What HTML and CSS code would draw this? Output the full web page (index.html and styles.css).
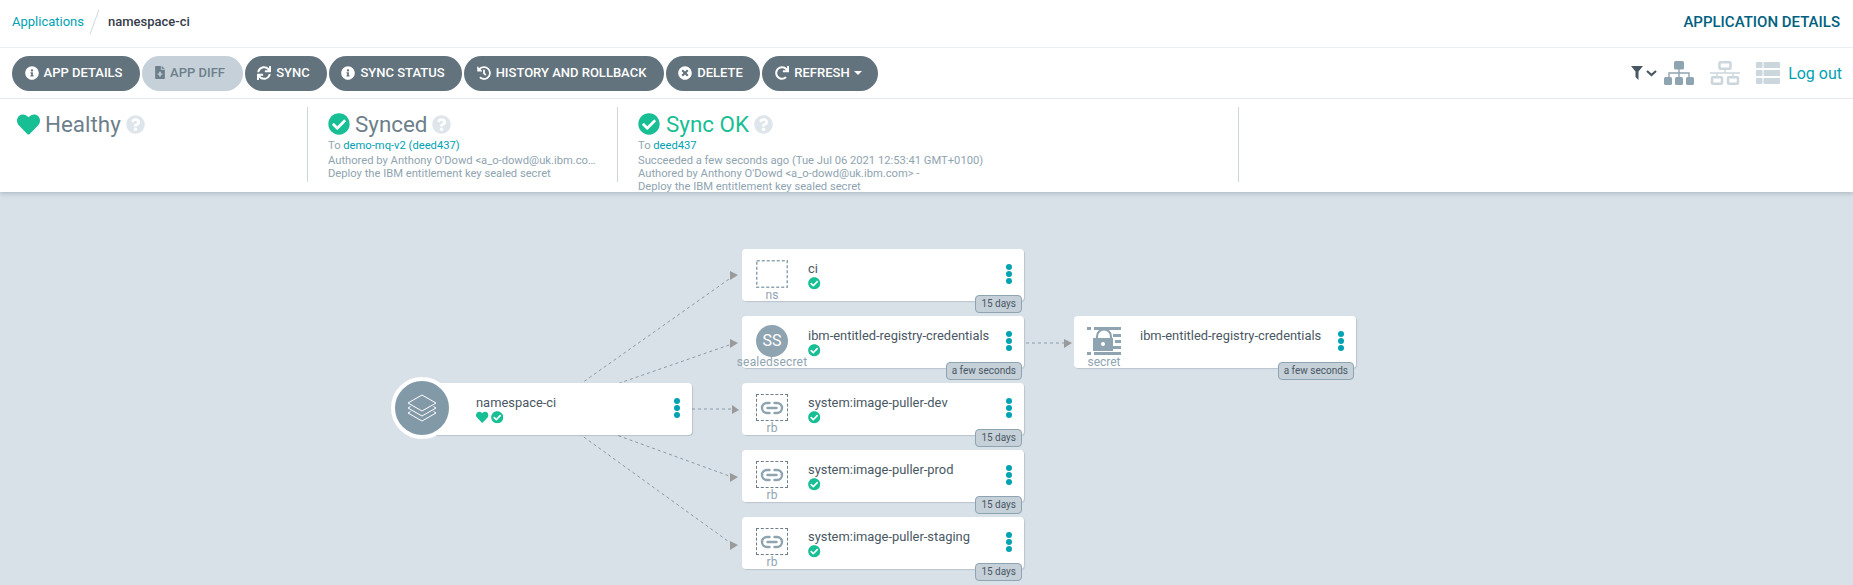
FILE: index.html
```html
<!DOCTYPE html>
<html lang="en">
<head>
  <meta charset="UTF-8" />
  <title>namespace-ci - Argo CD</title>
  <link rel="stylesheet" href="styles.css">
</head>
<body>
  <svg class="sprites" xmlns="http://www.w3.org/2000/svg">
    <symbol id="i-check" viewBox="0 0 512 512"><path d="M504 256c0 136.967-111.033 248-248 248S8 392.967 8 256 119.033 8 256 8s248 111.033 248 248zM227.314 387.314l184-184c6.248-6.248 6.248-16.379 0-22.627l-22.627-22.627c-6.248-6.249-16.379-6.249-22.628 0L216 308.118l-70.059-70.059c-6.248-6.248-16.379-6.248-22.628 0l-22.627 22.627c-6.248 6.248-6.248 16.379 0 22.627l104 104c6.249 6.249 16.379 6.249 22.628.001z"/></symbol>
    <symbol id="i-heart" viewBox="0 0 512 512"><path d="M462.3 62.6C407.5 15.9 326 24.3 275.7 76.2L256 96.5l-19.7-20.3C186.1 24.3 104.5 15.9 49.7 62.6c-62.8 53.6-66.1 149.8-9.9 207.9l193.5 199.8c12.5 12.9 32.8 12.9 45.3 0l193.5-199.8c56.3-58.1 53-154.3-9.8-207.9z"/></symbol>
    <symbol id="i-question" viewBox="0 0 512 512"><path d="M504 256c0 136.997-111.043 248-248 248S8 392.997 8 256C8 119.083 119.043 8 256 8s248 111.083 248 248zM262.655 90c-54.497 0-89.255 22.957-116.549 63.758-3.536 5.286-2.353 12.415 2.715 16.258l34.699 26.31c5.205 3.947 12.621 3.008 16.665-2.122 17.864-22.658 30.113-35.797 57.303-35.797 20.429 0 45.698 13.148 45.698 32.958 0 14.976-12.363 22.667-32.534 33.976C247.128 238.528 216 254.941 216 296v4c0 6.627 5.373 12 12 12h56c6.627 0 12-5.373 12-12v-1.333c0-28.462 83.186-29.647 83.186-106.667 0-58.002-60.165-102-116.531-102zM256 338c-25.365 0-46 20.635-46 46 0 25.364 20.635 46 46 46s46-20.636 46-46c0-25.365-20.635-46-46-46z"/></symbol>
    <symbol id="i-info" viewBox="0 0 512 512"><path d="M256 8C119.043 8 8 119.083 8 256c0 136.997 111.043 248 248 248s248-111.003 248-248C504 119.083 392.957 8 256 8zm0 110c23.196 0 42 18.804 42 42s-18.804 42-42 42-42-18.804-42-42 18.804-42 42-42zm56 254c0 6.627-5.373 12-12 12h-88c-6.627 0-12-5.373-12-12v-24c0-6.627 5.373-12 12-12h12v-64h-12c-6.627 0-12-5.373-12-12v-24c0-6.627 5.373-12 12-12h64c6.627 0 12 5.373 12 12v100h12c6.627 0 12 5.373 12 12v24z"/></symbol>
    <symbol id="i-times" viewBox="0 0 512 512"><path d="M256 8C119 8 8 119 8 256s111 248 248 248 248-111 248-248S393 8 256 8zm121.6 313.1c4.7 4.7 4.7 12.3 0 17L338 377.6c-4.7 4.7-12.3 4.7-17 0L256 312l-65.1 65.6c-4.7 4.7-12.3 4.7-17 0L134.4 338c-4.7-4.7-4.7-12.3 0-17l65.6-65-65.6-65.1c-4.7-4.7-4.7-12.3 0-17l39.6-39.6c4.7-4.7 12.3-4.7 17 0l65 65.7 65.1-65.6c4.7-4.7 12.3-4.7 17 0l39.6 39.6c4.7 4.7 4.7 12.3 0 17L312 256l65.6 65.1z"/></symbol>
    <symbol id="i-sync" viewBox="0 0 512 512"><path d="M440.65 12.57l4 82.77A247.16 247.16 0 0 0 255.83 8C134.73 8 33.91 94.92 12.29 209.82A12 12 0 0 0 24.09 224h49.05a12 12 0 0 0 11.67-9.26 175.91 175.91 0 0 1 317-56.94l-101.46-4.86a12 12 0 0 0-12.57 12v47.41a12 12 0 0 0 12 12H500a12 12 0 0 0 12-12V12a12 12 0 0 0-12-12h-47.37a12 12 0 0 0-11.98 12.57zM255.83 432a175.61 175.61 0 0 1-146-77.8l101.8 4.87a12 12 0 0 0 12.57-12v-47.4a12 12 0 0 0-12-12H12a12 12 0 0 0-12 12V500a12 12 0 0 0 12 12h47.35a12 12 0 0 0 12-12.6l-4.15-82.57A247.17 247.17 0 0 0 255.83 504c121.11 0 221.93-86.92 243.55-201.82a12 12 0 0 0-11.8-14.18h-49.05a12 12 0 0 0-11.67 9.26A175.86 175.86 0 0 1 255.83 432z"/></symbol>
    <symbol id="i-history" viewBox="0 0 512 512"><path d="M504 255.531c.253 136.64-111.18 248.372-247.82 248.468-59.015.042-113.223-20.53-155.822-54.911-11.077-8.94-11.905-25.541-1.839-35.607l11.267-11.267c8.609-8.609 22.353-9.551 31.891-1.984C173.062 425.135 212.781 440 256 440c101.705 0 184-82.311 184-184 0-101.705-82.311-184-184-184-48.814 0-93.149 18.969-126.068 49.932l50.754 50.754c10.08 10.08 2.941 27.314-11.313 27.314H24c-8.837 0-16-7.163-16-16V38.627c0-14.254 17.234-21.393 27.314-11.314l49.372 49.372C129.209 34.136 189.552 8 256 8c136.81 0 247.747 110.78 248 247.531zm-180.912 78.784l9.823-12.63c8.138-10.463 6.253-25.542-4.21-33.679L288 256.349V152c0-13.255-10.745-24-24-24h-16c-13.255 0-24 10.745-24 24v135.651l65.409 50.874c10.463 8.137 25.541 6.253 33.679-4.21z"/></symbol>
    <symbol id="i-redo" viewBox="0 0 512 512"><path d="M500.33 0h-47.41a12 12 0 0 0-12 12.57l4 82.76A247.42 247.42 0 0 0 256 8C119.34 8 7.9 119.53 8 256.19 8.1 393.07 119.1 504 256 504a247.1 247.1 0 0 0 166.18-63.91 12 12 0 0 0 .48-17.43l-34-34a12 12 0 0 0-16.38-.55A176 176 0 1 1 402.1 157.8l-101.53-4.87a12 12 0 0 0-12.57 12v47.41a12 12 0 0 0 12 12h200.33a12 12 0 0 0 12-12V12a12 12 0 0 0-12-12z"/></symbol>
    <symbol id="i-file" viewBox="0 0 12 16"><path fill-rule="evenodd" d="M1 0h6v4.500h5V15a1 1 0 0 1-1 1H1a1 1 0 0 1-1-1V1a1 1 0 0 1 1-1zM8 0l4 3.500H8zM5 7v2.200H3v1.600h2V13h2v-2.200h2V9.200H7V7z"/></symbol>
    <symbol id="i-link" viewBox="0 0 24 14"><path d="M9.500 2H7a5 5 0 0 0 0 10h2.500M14.500 2H17a5 5 0 0 1 0 10h-2.500M7.500 7h9" fill="none" stroke="currentColor" stroke-width="2.400" stroke-linecap="round"/></symbol>
  </svg>

  <div class="topbar">
    <div class="crumbs">
      <a class="link">Applications</a>
      <span class="crumb-sep"></span>
      <span class="crumb-current">namespace-ci</span>
    </div>
    <div class="page-title">APPLICATION DETAILS</div>
  </div>

  <div class="toolbar">
    <div class="actions">
      <button class="btn btn-details"><svg><use href="#i-info"/></svg>APP DETAILS</button>
      <button class="btn btn-diff"><svg class="ic-file"><use href="#i-file"/></svg>APP DIFF</button>
      <button class="btn btn-sync"><svg><use href="#i-sync"/></svg>SYNC</button>
      <button class="btn btn-status"><svg><use href="#i-info"/></svg>SYNC STATUS</button>
      <button class="btn btn-history"><svg><use href="#i-history"/></svg>HISTORY AND ROLLBACK</button>
      <button class="btn btn-delete"><svg><use href="#i-times"/></svg>DELETE</button>
      <button class="btn btn-refresh"><svg><use href="#i-redo"/></svg>REFRESH<span class="caret"></span></button>
    </div>
    <div class="view-tools">
      <svg class="ic-filter" viewBox="0 0 12 14"><path d="M0 0h12L7.500 5.500V14L4.500 11V5.500z"/></svg>
      <svg class="ic-chevron" viewBox="0 0 11 7"><path d="M1 1l4.500 4L10 1" fill="none" stroke="currentColor" stroke-width="2.200"/></svg>
      <svg class="ic-tree" viewBox="0 0 30 24">
        <rect x="10" y="0" width="10" height="8.500" rx="1.500" fill="currentColor"/>
        <path d="M15 8v4M5 16v-4h20v4M15 12v4" fill="none" stroke="currentColor" stroke-width="1.400"/>
        <rect x="0" y="16" width="8" height="8" rx="1.500" fill="currentColor"/>
        <rect x="11" y="16" width="8" height="8" rx="1.500" fill="currentColor"/>
        <rect x="22" y="16" width="8" height="8" rx="1.500" fill="currentColor"/>
      </svg>
      <svg class="ic-network" viewBox="0 0 30 24">
        <rect x="9.500" y="1.250" width="11" height="6.500" rx="1" fill="none" stroke="currentColor" stroke-width="2.500"/>
        <path d="M15 8v4M0 12h30M7 12v5M23 12v5" fill="none" stroke="currentColor" stroke-width="1.400"/>
        <rect x="2" y="16.250" width="10" height="6.500" rx="1" fill="none" stroke="currentColor" stroke-width="2.500"/>
        <rect x="18" y="16.250" width="10" height="6.500" rx="1" fill="none" stroke="currentColor" stroke-width="2.500"/>
      </svg>
      <svg class="ic-list" viewBox="0 0 24 22">
        <rect x="0" y="0" width="6.500" height="6" rx="1" fill="currentColor"/>
        <rect x="7.500" y="0" width="16.500" height="6" rx="1" fill="currentColor"/>
        <rect x="0" y="8" width="6.500" height="6" rx="1" fill="currentColor"/>
        <rect x="7.500" y="8" width="16.500" height="6" rx="1" fill="currentColor"/>
        <rect x="0" y="16" width="6.500" height="6" rx="1" fill="currentColor"/>
        <rect x="7.500" y="16" width="16.500" height="6" rx="1" fill="currentColor"/>
      </svg>
      <a class="link logout">Log out</a>
    </div>
  </div>

  <div class="status-panel">
    <div class="status-item status-health">
      <div class="status-head">
        <svg class="ic-heart"><use href="#i-heart"/></svg>
        <span class="status-value">Healthy</span>
        <svg class="ic-help"><use href="#i-question"/></svg>
      </div>
    </div>
    <div class="status-item status-sync">
      <div class="status-head">
        <svg class="ic-check"><use href="#i-check"/></svg>
        <span class="status-value">Synced</span>
        <svg class="ic-help"><use href="#i-question"/></svg>
      </div>
      <div class="status-line status-to">To <a class="link">demo-mq-v2 (deed437)</a></div>
      <div class="status-line status-cut">Authored by Anthony O'Dowd &lt;a_o-dowd@uk.ibm.com&gt; -</div>
      <div class="status-line">Deploy the IBM entitlement key sealed secret</div>
    </div>
    <div class="status-item status-op">
      <div class="status-head">
        <svg class="ic-check"><use href="#i-check"/></svg>
        <span class="status-value status-ok">Sync OK</span>
        <svg class="ic-help"><use href="#i-question"/></svg>
      </div>
      <div class="status-line status-to">To <a class="link">deed437</a></div>
      <div class="status-line">Succeeded a few seconds ago (Tue Jul 06 2021 12:53:41 GMT+0100)</div>
      <div class="status-line">Authored by Anthony O'Dowd &lt;a_o-dowd@uk.ibm.com&gt; -</div>
      <div class="status-line">Deploy the IBM entitlement key sealed secret</div>
    </div>
  </div>

  <div class="graph">
    <svg class="edges" width="1853" height="393">
      <g class="edge-lines">
        <path d="M545 217L732 85"/>
        <path d="M545 217L732 152"/>
        <path d="M692 217L732 217"/>
        <path d="M545 217L732 285"/>
        <path d="M545 217L732 352"/>
        <path d="M1026 151L1064 151"/>
      </g>
      <g class="edge-arrows">
        <path d="M730 79l8 4-8 5z"/>
        <path d="M730 147l8 4-8 5z"/>
        <path d="M732 213l7 5-7 4z"/>
        <path d="M730 281l8 4-8 5z"/>
        <path d="M730 349l8 4-8 5z"/>
        <path d="M1064 147l8 4-8 5z"/>
      </g>
    </svg>

    <div class="node node-root">
      <div class="root-circle">
        <svg viewBox="0 0 32 32">
          <path d="M16 3L30 11L16 19L2 11Z M4.500 14.500L2 16L16 24L30 16L27.500 14.500 M4.500 19.500L2 21L16 29L30 21L27.500 19.500" fill="none" stroke="#fff" stroke-width="1" stroke-linejoin="round"/>
        </svg>
      </div>
      <div class="node-kind"></div>
      <div class="node-info">
        <div class="node-name">namespace-ci</div>
        <div class="node-status">
          <svg class="ic-status"><use href="#i-heart"/></svg>
          <svg class="ic-status"><use href="#i-check"/></svg>
        </div>
      </div>
      <div class="dots"><span></span><span></span><span></span></div>
    </div>

    <div class="node node-ns">
      <div class="node-kind">
        <svg class="kind-ns" viewBox="0 0 32 28"><rect x="0.750" y="0.750" width="30.500" height="26.500" fill="none" stroke="currentColor" stroke-width="1.500" stroke-dasharray="3 2"/></svg>
        <div class="kind-label">ns</div>
      </div>
      <div class="node-info">
        <div class="node-name">ci</div>
        <div class="node-status"><svg class="ic-status"><use href="#i-check"/></svg></div>
      </div>
      <div class="dots"><span></span><span></span><span></span></div>
      <div class="age">15 days</div>
    </div>

    <div class="node node-sealed">
      <div class="node-kind"><div class="kind-circle">SS</div><div class="kind-label">sealedsecret</div></div>
      <div class="node-info">
        <div class="node-name">ibm-entitled-registry-credentials</div>
        <div class="node-status"><svg class="ic-status"><use href="#i-check"/></svg></div>
      </div>
      <div class="dots"><span></span><span></span><span></span></div>
      <div class="age">a few seconds</div>
    </div>

    <div class="node node-secret">
      <div class="node-kind">
        <svg class="kind-secret" viewBox="0 0 34 28">
          <path d="M0 0h4v3H0zM7 0h27v3H7zM26 7h8v3h-8zM28 13h6v3h-6zM26 19h8v3h-8zM0 25h4v3H0zM7 25h27v3H7z" fill="currentColor"/>
          <path d="M10 11V9.500a7 7 0 0 1 14 0V11" fill="none" stroke="currentColor" stroke-width="2.200"/>
          <path fill-rule="evenodd" d="M6 11h20v13H6zM16 15a2 2 0 1 0 0 4 2 2 0 0 0 0-4z" fill="currentColor"/>
        </svg>
        <div class="kind-label">secret</div>
      </div>
      <div class="node-info">
        <div class="node-name">ibm-entitled-registry-credentials</div>
      </div>
      <div class="dots"><span></span><span></span><span></span></div>
      <div class="age">a few seconds</div>
    </div>

    <div class="node node-dev">
      <div class="node-kind"><div class="kind-box"><svg><use href="#i-link"/></svg></div><div class="kind-label">rb</div></div>
      <div class="node-info">
        <div class="node-name">system:image-puller-dev</div>
        <div class="node-status"><svg class="ic-status"><use href="#i-check"/></svg></div>
      </div>
      <div class="dots"><span></span><span></span><span></span></div>
      <div class="age">15 days</div>
    </div>

    <div class="node node-prod">
      <div class="node-kind"><div class="kind-box"><svg><use href="#i-link"/></svg></div><div class="kind-label">rb</div></div>
      <div class="node-info">
        <div class="node-name">system:image-puller-prod</div>
        <div class="node-status"><svg class="ic-status"><use href="#i-check"/></svg></div>
      </div>
      <div class="dots"><span></span><span></span><span></span></div>
      <div class="age">15 days</div>
    </div>

    <div class="node node-staging">
      <div class="node-kind"><div class="kind-box"><svg><use href="#i-link"/></svg></div><div class="kind-label">rb</div></div>
      <div class="node-info">
        <div class="node-name">system:image-puller-staging</div>
        <div class="node-status"><svg class="ic-status"><use href="#i-check"/></svg></div>
      </div>
      <div class="dots"><span></span><span></span><span></span></div>
      <div class="age">15 days</div>
    </div>
  </div>
</body>
</html>
```

FILE: styles.css
```css
* { box-sizing: border-box; }
html, body { height: 100%; }
body {
  margin: 0;
  font-family: Roboto, 'Noto Sans', sans-serif;
  color: #495763;
  background: #fff;
  overflow: hidden;
  display: flex;
  flex-direction: column;
}
.sprites { display: none; }
svg { fill: currentColor; display: block; flex: none; }
.link { color: #00a2b3; text-decoration: none; }

/* top bar */
.topbar {
  height: 48px;
  padding: 0 13px 4px 12px;
  border-bottom: 1px solid #eceff2;
  display: flex;
  align-items: center;
  justify-content: space-between;
  font-size: 13px;
}
.crumbs { display: flex; align-items: center; }
.crumb-sep {
  width: 1px;
  height: 26px;
  margin: 0 13px 0 10px;
  background: #d3dbe1;
  transform: rotate(20deg);
}
.crumb-current { color: #363c4a; font-weight: 500; }
.page-title { font-size: 15px; font-weight: 500; color: #00617f; }

/* toolbar */
.toolbar {
  height: 51px;
  padding: 0 11px 0 12px;
  border-bottom: 1px solid #eceff2;
  display: flex;
  align-items: center;
  justify-content: space-between;
}
.actions { display: flex; gap: 2px; }
.btn {
  height: 35px;
  padding: 0 5px 1px 0;
  border: 0;
  border-radius: 18px;
  background: #62737e;
  color: #fff;
  font: 500 13px Roboto, sans-serif;
  display: flex;
  align-items: center;
  justify-content: center;
  gap: 5px;
}
.btn svg { width: 14px; height: 14px; }
.btn .ic-file { width: 10px; height: 13px; }
.btn-details { width: 128px; }
.btn-diff { width: 101px; background: #c5d0d9; color: #6d7f8b; }
.btn-sync { width: 82px; }
.btn-status { width: 133px; }
.btn-history { width: 200px; }
.btn-delete { width: 94px; }
.btn-refresh { width: 116px; padding-right: 3px; }
.caret {
  margin-left: -1px;
  border-top: 4px solid #fff;
  border-left: 4px solid transparent;
  border-right: 4px solid transparent;
}
.view-tools { display: flex; align-items: center; }
.ic-filter { width: 12px; height: 14px; color: #495763; }
.ic-chevron { width: 11px; height: 7px; margin: 0 7px 0 3px; color: #495763; }
.ic-tree { width: 30px; height: 24px; color: #8fa4b1; margin-right: 16px; }
.ic-network { width: 30px; height: 24px; color: #ccd6dd; margin-right: 16px; }
.ic-list { width: 24px; height: 22px; color: #ccd6dd; margin-right: 8px; }
.logout { font-size: 16px; }

/* status panel */
.status-panel {
  height: 93px;
  padding: 8px 0 0 0;
  display: flex;
  align-items: flex-start;
  background: #fff;
  box-shadow: 0 2px 4px rgba(73, 87, 99, 0.25);
  position: relative;
  z-index: 2;
}
.status-item {
  height: 75px;
  padding: 6px 0 0 20px;
  border-right: 1px solid #ccd6dd;
  font-size: 11.200px;
  color: #8fa4b1;
}
.status-health { width: 308px; padding-left: 17px; }
.status-sync { width: 310px; }
.status-op { width: 621px; }
.status-head { display: flex; align-items: center; height: 22px; margin-bottom: 3px; }
.status-value { font-size: 22.400px; color: #6d7f8b; margin-left: 5px; }
.status-ok { color: #18be94; margin-left: 6px; }
.ic-heart { width: 23px; height: 23px; color: #18be94; }
.ic-check { width: 22px; height: 22px; color: #18be94; }
.ic-help { width: 19px; height: 19px; margin-left: 5px; color: #dee6eb; }
.status-line { height: 13px; line-height: 13px; white-space: nowrap; }
.status-to { height: 15px; line-height: 15px; margin-bottom: 1px; }
.status-cut { width: 272px; overflow: hidden; text-overflow: ellipsis; }

/* graph */
.graph { flex: 1; position: relative; background: #d8e1e8; }
.edges { position: absolute; left: 0; top: 0; }
.edge-lines path { fill: none; stroke: #8a9aa6; stroke-width: 1; stroke-dasharray: 3 3; }
.edge-arrows path { fill: #9a9a9a; }

.node {
  position: absolute;
  width: 282px;
  height: 52px;
  display: flex;
  background: #fff;
  border-radius: 4px;
  box-shadow: 1px 1px 1px rgba(73, 87, 99, 0.2);
}
.node-root { left: 410px; top: 191px; }
.node-ns { left: 742px; top: 57px; }
.node-sealed { left: 742px; top: 124px; }
.node-secret { left: 1074px; top: 124px; }
.node-dev { left: 742px; top: 191px; }
.node-prod { left: 742px; top: 258px; }
.node-staging { left: 742px; top: 325px; }

.node-kind {
  width: 60px;
  margin-right: 6px;
  padding-top: 11px;
  display: flex;
  flex-direction: column;
  align-items: center;
  flex: none;
}
.kind-box {
  width: 32px;
  height: 28px;
  border: 1px dashed #6d7f8b;
  color: #8fa4b1;
  display: flex;
  align-items: center;
  justify-content: center;
}
.kind-box svg { width: 24px; height: 14px; }
.kind-ns { width: 32px; height: 28px; color: #8fa4b1; }
.kind-circle {
  width: 32px;
  height: 32px;
  margin-top: -2px;
  margin-bottom: -2px;
  border-radius: 50%;
  background: #8fa4b1;
  color: #fff;
  font-size: 16px;
  line-height: 32px;
  text-align: center;
}
.kind-secret { width: 34px; height: 28px; color: #8fa4b1; }
.kind-label {
  font-size: 12px;
  line-height: 14px;
  margin-top: 0;
  color: #8fa4b1;
  white-space: nowrap;
}
.node-sealed .kind-label { letter-spacing: 0.2px; }
.node-info { flex: 1; padding-top: 12px; min-width: 0; }
.node-name { font-size: 12.900px; line-height: 16px; color: #495763; white-space: nowrap; }
.node-status { display: flex; gap: 2px; color: #18be94; }
.ic-status { width: 12.500px; height: 12.500px; }
.dots {
  width: 6px;
  margin: 15px 12px 0 0;
  display: flex;
  flex-direction: column;
  gap: 1px;
  flex: none;
}
.dots span { width: 6px; height: 6px; border-radius: 50%; background: #00a2b3; }
.age {
  position: absolute;
  right: 2px;
  bottom: -12px;
  height: 18px;
  padding: 0 5px;
  border: 1px solid #8fa4b1;
  border-radius: 4px;
  background: #c5d0d9;
  color: #495763;
  font-size: 10px;
  line-height: 16px;
}

.root-circle {
  position: absolute;
  left: -19px;
  top: -6px;
  width: 62px;
  height: 62px;
  border: 4px solid #fff;
  border-radius: 50%;
  background: #8299a8;
  display: flex;
  align-items: center;
  justify-content: center;
}
.root-circle svg { width: 32px; height: 32px; }
```
